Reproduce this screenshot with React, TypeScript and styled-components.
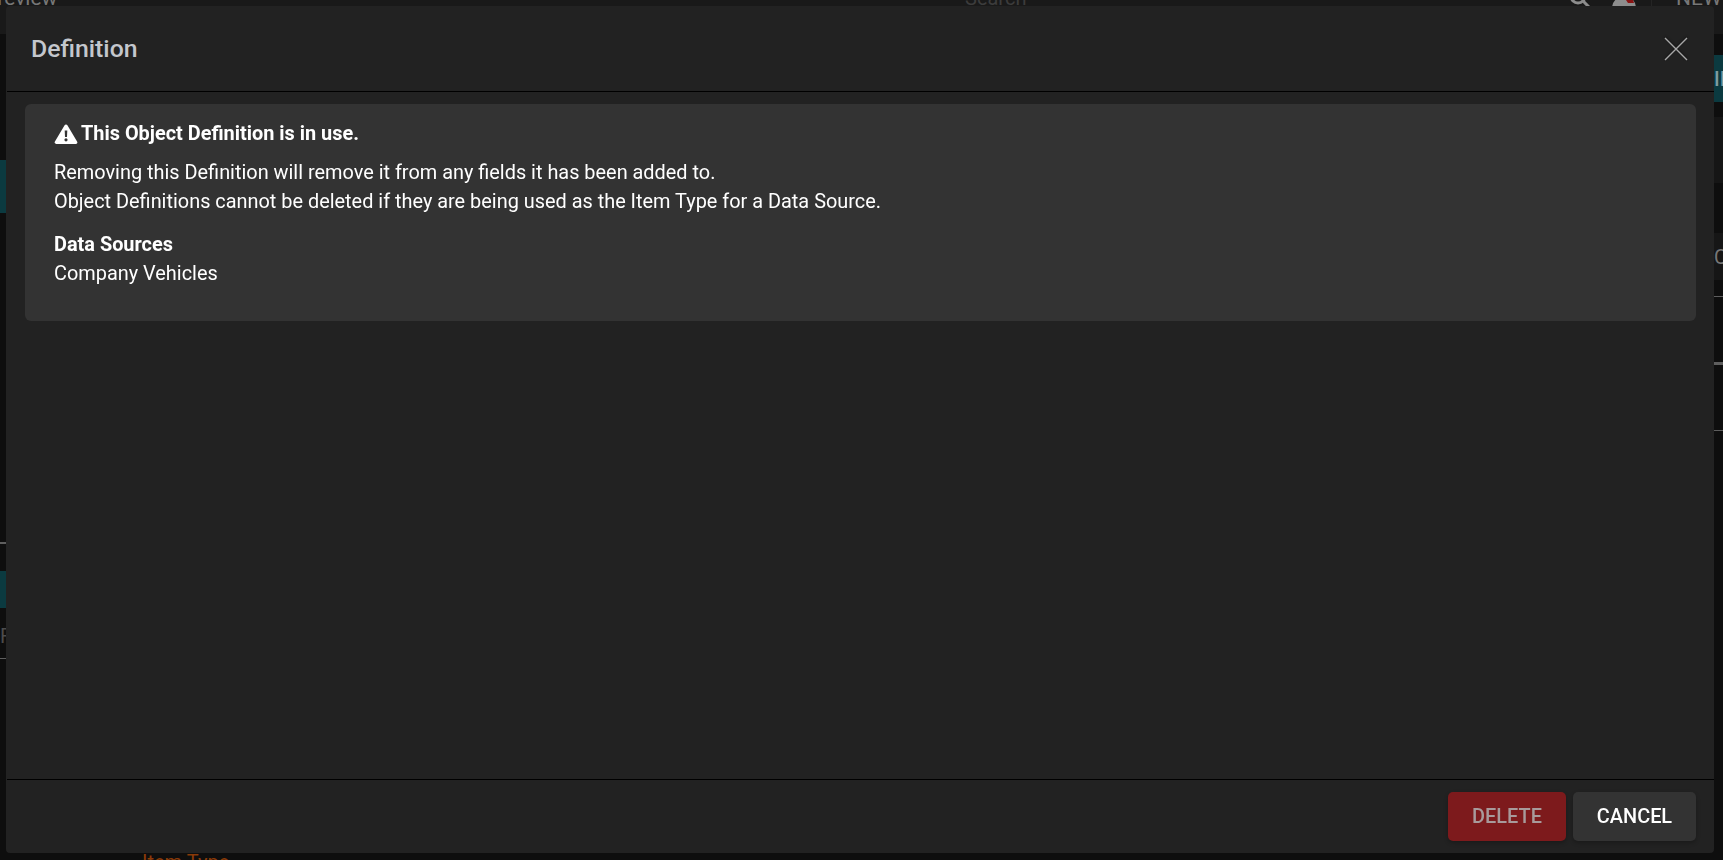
import React from 'react'
import styled, { createGlobalStyle } from 'styled-components'

const GlobalStyle = createGlobalStyle`
    html, body {
        margin: 0;
        height: 100%;
        background: #0e0e0e;
        font-family: Roboto, "Liberation Sans", sans-serif;
        overflow: hidden;
    }
`

/* page behind the dialog, dimmed */
const Page = styled.div`
    height: 860px;
    display: flex;
    flex-direction: column;
    background: #0e0e0e;
    overflow: hidden;
`

const TopBar = styled.div`
    height: 34px;
    flex: none;
    background: #191919;
    display: grid;
    grid-template-columns: 965px 605px 41px 40px 1fr;
    overflow: hidden;
    font-size: 21px;
    line-height: 1;
`

const TopText = styled.span<{ dim?: boolean }>`
    margin-top: -12px;
    color: ${props => props.dim ? '#3c3c3c' : '#777777'};
    font-size: ${props => props.dim ? 20 : 21}px;
    white-space: nowrap;
`

const ViewTitle = styled(TopText)`
    margin-left: -16px;
`

const TopIcon = styled.svg`
    display: block;
    margin-top: -12px;
`

const NewCell = styled.div`
    border-left: 1px solid #242424;
    padding-left: 24px;
    display: flex;
`

const Main = styled.div`
    height: 816px;
    flex: none;
    display: flex;
    justify-content: space-between;
`

const Edge = styled.div`
    width: 9px;
    display: flex;
    flex-direction: column;
    overflow: hidden;
`

const Band = styled.div<{ top: number; size: number }>`
    height: ${props => props.size}px;
    margin-top: ${props => props.top}px;
    background: #0b3a40;
    color: #7f9da0;
    font-size: 20px;
    font-weight: 500;
    display: flex;
    align-items: center;
    white-space: nowrap;
`

const Block = styled.div<{ top: number; size: number }>`
    height: ${props => props.size}px;
    margin-top: ${props => props.top}px;
    background: #161616;
    color: #777777;
    font-size: 20px;
    display: flex;
    align-items: center;
`

const FieldLabel = styled.div<{ top: number }>`
    margin-top: ${props => props.top}px;
    height: 22px;
    line-height: 22px;
    color: #4c4c4c;
    font-size: 20px;
    text-align: right;
`

const Rule = styled.div<{ top: number; size?: number }>`
    height: ${props => props.size || 1}px;
    flex: none;
    margin-top: ${props => props.top}px;
    background: #5e5e5e;
`

const ItemType = styled.div`
    margin-left: 142px;
    color: #8a3a08;
    font-size: 20px;
    line-height: 24px;
    white-space: nowrap;
`

/* dialog */
const Dialog = styled.div`
    position: fixed;
    left: 6px;
    top: 6px;
    width: 1708px;
    height: 847px;
    background: #222222;
    border-radius: 4px;
    display: flex;
    flex-direction: column;
`

const DialogHeader = styled.header`
    height: 86px;
    flex: none;
    box-sizing: border-box;
    border-bottom: 1px solid #000;
    margin-left: 1px;
    padding: 0 26px 0 24px;
    display: flex;
    align-items: center;
    justify-content: space-between;
`

const Title = styled.h2`
    margin: 0;
    font-size: 24.8px;
    font-weight: 500;
    color: #c4c7cd;
`

const CloseButton = styled.button`
    width: 24px;
    height: 24px;
    padding: 0;
    border: 0;
    background: none;
    display: flex;
    filter: drop-shadow(0 -1px 1px #111111);
`

const DialogBody = styled.div`
    flex: 1;
    padding: 12px 18px 0 19px;
`

const Notice = styled.section`
    height: 217px;
    box-sizing: border-box;
    background: #333333;
    border-radius: 6px;
    padding: 15px 29px;
    color: #ffffff;
    font-size: 19.9px;
    line-height: 29px;
`

const NoticeTitle = styled.div`
    display: flex;
    align-items: center;
    gap: 3px;
    font-weight: 700;
    margin-bottom: 10px;
`

const SubTitle = styled.div`
    font-weight: 700;
    margin: 14px 0 0;
`

const DialogFooter = styled.footer`
    height: 74px;
    flex: none;
    box-sizing: border-box;
    border-top: 1px solid #000;
    margin-left: 1px;
    padding: 12px 18px 0 0;
    display: flex;
    justify-content: flex-end;
    gap: 7px;
`

const ActionButton = styled.button<{ danger?: boolean }>`
    height: 49px;
    width: ${props => props.danger ? 118 : 123}px;
    padding: 0;
    border: 0;
    border-radius: 5px;
    background: ${props => props.danger ? '#7d1a1c' : '#333333'};
    color: ${props => props.danger ? '#a89a9b' : '#ffffff'};
    font-family: inherit;
    font-size: 19.9px;
    font-weight: 500;
    box-shadow: 0 2px 4px rgba(0, 0, 0, .25);
`

const App: React.FC = () => {
    return (
        <>
            <GlobalStyle />
            <Page>
                <TopBar>
                    <ViewTitle>Preview</ViewTitle>
                    <TopText dim>Search</TopText>
                    <TopIcon width="20" height="20" viewBox="0 0 20 20" fill="none" stroke="#8d8d8d" strokeWidth="3">
                        <circle cx="8" cy="8" r="7" />
                        <path d="M13 13 L19 19" />
                    </TopIcon>
                    <TopIcon width="26" height="20" viewBox="0 0 26 20">
                        <path fill="#8d8d8d" d="M1 19 Q2 11 10 9 L17 9 Q24 11 25 19 Z" />
                        <path fill="#8a1414" d="M15 12 H22 L23 15 H17 Z" />
                    </TopIcon>
                    <NewCell>
                        <TopText>NEW</TopText>
                    </NewCell>
                </TopBar>
                <Main>
                    <Edge>
                        <Band top={126} size={53} />
                        <Rule top={329} size={2} />
                        <Band top={27} size={37} />
                        <FieldLabel top={17}>Fi</FieldLabel>
                        <Rule top={11} />
                    </Edge>
                    <Edge>
                        <Band top={21} size={47}>II</Band>
                        <Block top={15} size={66} />
                        <Block top={50} size={47}>C</Block>
                        <Rule top={16} />
                        <Rule top={65} size={3} />
                        <Rule top={65} />
                    </Edge>
                </Main>
                <ItemType>Item Type</ItemType>
            </Page>
            <Dialog>
                <DialogHeader>
                    <Title>Definition</Title>
                    <CloseButton aria-label="Close">
                        <svg width="24" height="24" viewBox="0 0 24 24" fill="none" stroke="#a8a8a8" strokeWidth="1.4">
                            <path d="M1 1 L23 23 M23 1 L1 23" />
                        </svg>
                    </CloseButton>
                </DialogHeader>
                <DialogBody>
                    <Notice>
                        <NoticeTitle>
                            <svg width="24" height="20" viewBox="0 0 24 20">
                                <path fill="#fff" fillRule="evenodd" d="M12 .5c.6 0 1.100.3 1.400.8l9.800 16.400c.6 1-.1 2.300-1.400 2.300H2.200C.9 19.500.2 18.700.8 17.700L10.600 1.300c.3-.5.8-.8 1.400-.8zM10.700 6.500l.3 6.500h2l.3-6.500zM12 14.200a1.600 1.600 0 1 0 0 3.200 1.600 1.600 0 0 0 0-3.200z" />
                            </svg>
                            This Object Definition is in use.
                        </NoticeTitle>
                        <div>Removing this Definition will remove it from any fields it has been added to.</div>
                        <div>Object Definitions cannot be deleted if they are being used as the Item Type for a Data Source.</div>
                        <SubTitle>Data Sources</SubTitle>
                        <div>Company Vehicles</div>
                    </Notice>
                </DialogBody>
                <DialogFooter>
                    <ActionButton danger>DELETE</ActionButton>
                    <ActionButton>CANCEL</ActionButton>
                </DialogFooter>
            </Dialog>
        </>
    )
}

export default App
